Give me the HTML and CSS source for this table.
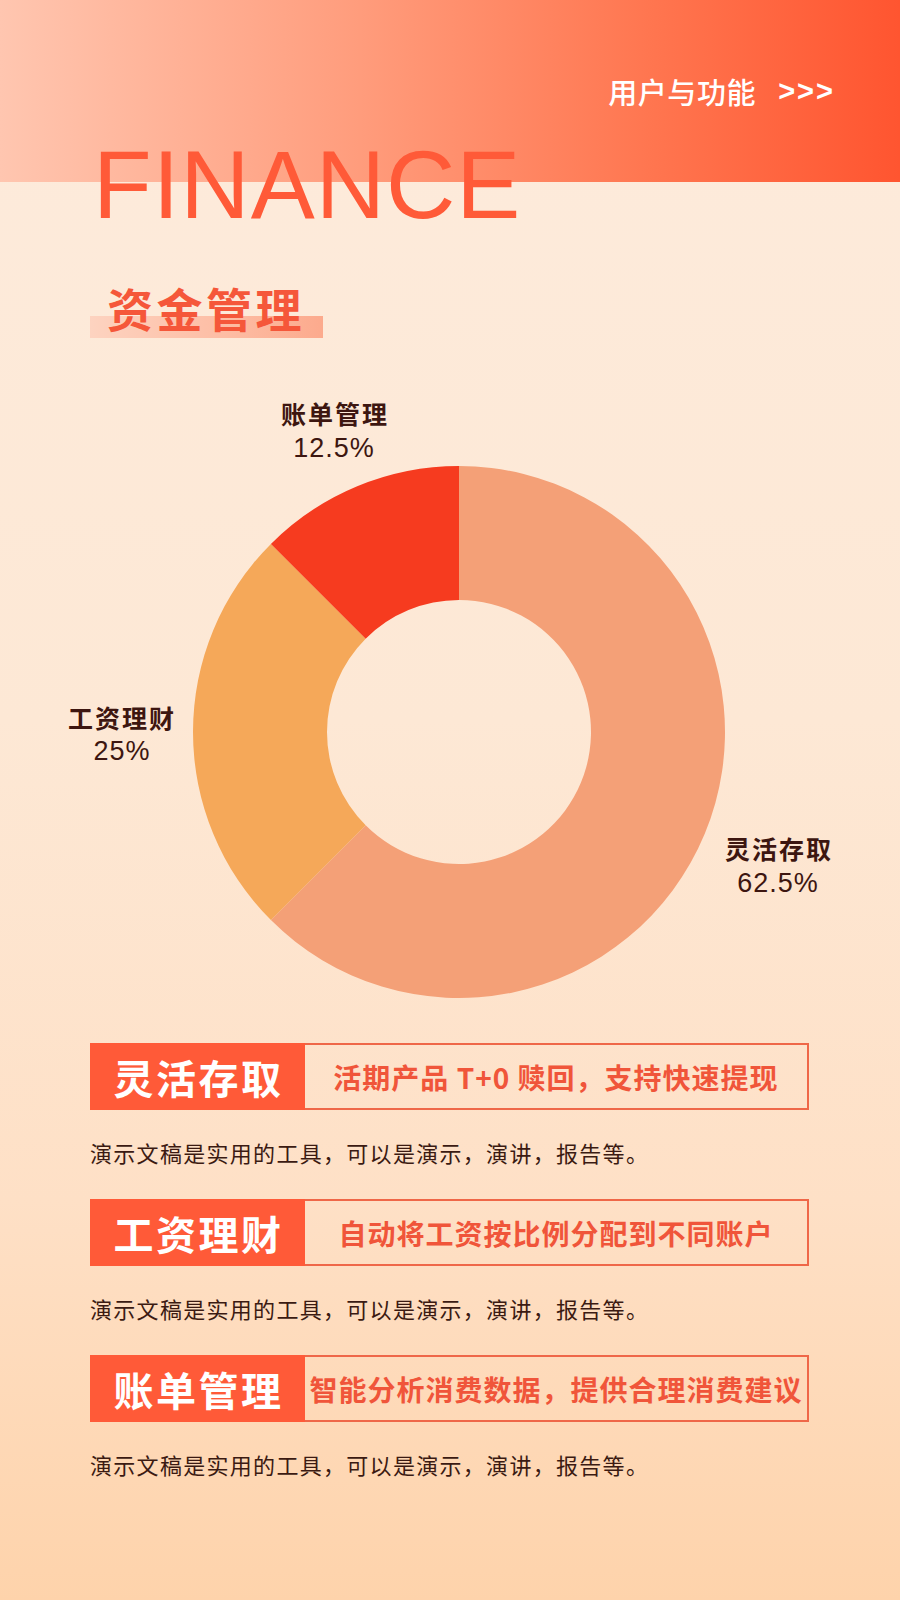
FILE: index.html
```html
<!DOCTYPE html>
<html lang="zh-CN">
<head>
<meta charset="utf-8">
<title>FINANCE 资金管理</title>
<link rel="stylesheet" href="styles.css">
</head>
<body>
<div class="page">
  <header class="hero">
    <nav class="nav"><span class="nav-text">用户与功能</span><span class="nav-arrows">&gt;&gt;&gt;</span></nav>
    <h1 class="big-title">FINANCE</h1>
    <h2 class="section-title">资金管理</h2>
  </header>

  <svg class="chart" width="900" height="700" viewBox="0 0 900 700" xmlns="http://www.w3.org/2000/svg">
    <path class="seg-flex" d="M459 128 A266 266 0 1 1 270.91 582.09 L365.66 487.34 A132 132 0 1 0 459 262 Z"/>
    <path class="seg-salary" d="M270.91 582.09 A266 266 0 0 1 270.91 205.91 L365.66 300.66 A132 132 0 0 0 365.66 487.34 Z"/>
    <path class="seg-bill" d="M270.91 205.91 A266 266 0 0 1 459 128 L459 262 A132 132 0 0 0 365.66 300.66 Z"/>

    <text class="lbl-name" x="335" y="86">账单管理</text>
    <text class="lbl-pct" x="334" y="119">12.5%</text>

    <text class="lbl-name" x="122" y="390">工资理财</text>
    <text class="lbl-pct" x="122" y="422">25%</text>

    <text class="lbl-name" x="779" y="521">灵活存取</text>
    <text class="lbl-pct" x="778" y="554">62.5%</text>
  </svg>

  <section class="features">
    <div class="card">
      <div class="card-title">灵活存取</div>
      <div class="card-text">活期产品 T+0 赎回，支持快速提现</div>
    </div>
    <p class="desc">演示文稿是实用的工具，可以是演示，演讲，报告等。</p>

    <div class="card">
      <div class="card-title">工资理财</div>
      <div class="card-text">自动将工资按比例分配到不同账户</div>
    </div>
    <p class="desc">演示文稿是实用的工具，可以是演示，演讲，报告等。</p>

    <div class="card">
      <div class="card-title">账单管理</div>
      <div class="card-text">智能分析消费数据，提供合理消费建议</div>
    </div>
    <p class="desc">演示文稿是实用的工具，可以是演示，演讲，报告等。</p>
  </section>
</div>
</body>
</html>
```

FILE: styles.css
```css
* {
  box-sizing: border-box;
}

html, body {
  margin: 0;
  padding: 0;
}

body {
  width: 900px;
  height: 1600px;
  overflow: hidden;
  font-family: "Noto Sans CJK SC", "Noto Sans", sans-serif;
  background: linear-gradient(180deg, #fdebdc 0%, #fde8d5 45%, #fee0c6 75%, #fed3ab 100%);
}

.page {
  width: 900px;
  height: 1600px;
}

.hero {
  padding-top: 77px;
  background-image: linear-gradient(90deg, #ffc6b0 0%, #ff9c7c 40%, #ff7650 72%, #ff5530 100%);
  background-size: 100% 182px;
  background-repeat: no-repeat;
}

.nav {
  display: flex;
  justify-content: flex-end;
  align-items: center;
  height: 28px;
  padding-right: 65px;
  color: #ffffff;
}

.nav-text {
  font-size: 29px;
  line-height: 28px;
  letter-spacing: 0.6px;
  font-weight: 500;
}

.nav-arrows {
  margin-left: 22px;
  font-family: "Liberation Sans", sans-serif;
  font-size: 29px;
  line-height: 28px;
  font-weight: 700;
  letter-spacing: 2px;
}

.big-title {
  margin: 32px 0 0 0;
  padding-left: 93px;
  font-family: "Liberation Sans", Arial, sans-serif;
  font-weight: 400;
  font-size: 96px;
  line-height: 96px;
  letter-spacing: 1px;
  color: #ff5a38;
}

.section-title {
  display: inline-block;
  margin: 51px 0 0 90px;
  padding: 0 18px 8px 17px;
  font-size: 46px;
  line-height: 46px;
  font-weight: 700;
  letter-spacing: 3.5px;
  color: #f5573a;
  background-image: linear-gradient(90deg, #fdd3c0 0%, #fdbca3 60%, #fcaa8d 100%);
  background-size: 100% 22px;
  background-position: left bottom;
  background-repeat: no-repeat;
}

.chart {
  display: block;
}

.seg-flex {
  fill: #f4a077;
}

.seg-salary {
  fill: #f5a859;
}

.seg-bill {
  fill: #f63b1f;
}

.lbl-name {
  font-family: "Noto Sans CJK SC", sans-serif;
  font-size: 25px;
  font-weight: 700;
  letter-spacing: 2px;
  fill: #3d1610;
  text-anchor: middle;
}

.lbl-pct {
  font-family: "Liberation Sans", Arial, sans-serif;
  font-size: 27px;
  font-weight: 400;
  letter-spacing: 1px;
  fill: #3d1610;
  text-anchor: middle;
}

.features {
  padding-left: 90px;
  margin-top: 5px;
}

.card {
  display: flex;
  width: 719px;
  height: 67px;
  border: 2px solid #ef6748;
  margin-top: 36px;
}

.card:first-child {
  margin-top: 0;
}

.card-title {
  display: flex;
  align-items: center;
  justify-content: center;
  width: 215px;
  margin: -2px 0 -2px -2px;
  background: #ff5a38;
  color: #ffffff;
  font-size: 40px;
  font-weight: 700;
  letter-spacing: 2.5px;
  padding-left: 2px;
}

.card-text {
  flex: 1;
  display: flex;
  align-items: center;
  justify-content: center;
  color: #f0553a;
  font-size: 28px;
  font-weight: 700;
  letter-spacing: 1px;
  white-space: nowrap;
}

.desc {
  margin: 31px 0 0 0;
  font-size: 22px;
  line-height: 22px;
  letter-spacing: 1.3px;
  color: #3b1a12;
  font-weight: 400;
}
```
